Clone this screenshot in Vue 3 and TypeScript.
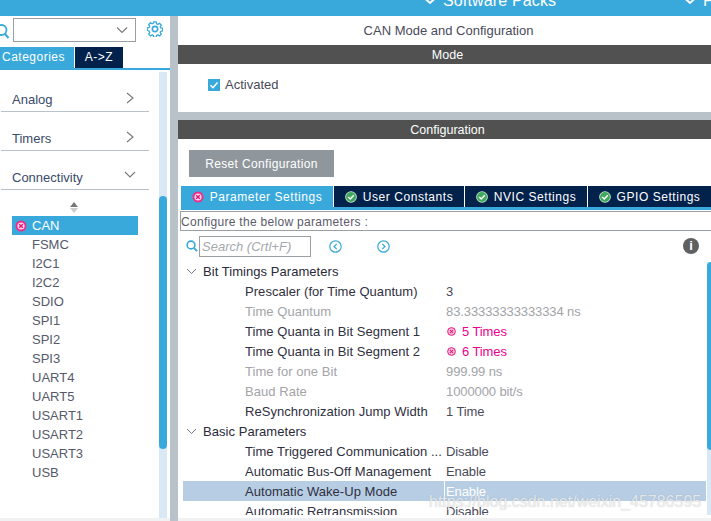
<script setup lang="ts">
interface Row { label?: string; value?: string; kind?: string; section?: boolean; selected?: boolean }
const modes: string[] = ['FSMC','I2C1','I2C2','SDIO','SPI1','SPI2','SPI3','UART4','UART5','USART1','USART2','USART3','USB']
const rows: Row[] = [
  { label: 'Bit Timings Parameters', section: true },
  { label: 'Prescaler (for Time Quantum)', value: '3' },
  { label: 'Time Quantum', value: '83.33333333333334 ns', kind: 'off' },
  { label: 'Time Quanta in Bit Segment 1', value: '5 Times', kind: 'err' },
  { label: 'Time Quanta in Bit Segment 2', value: '6 Times', kind: 'err' },
  { label: 'Time for one Bit', value: '999.99 ns', kind: 'off' },
  { label: 'Baud Rate', value: '1000000 bit/s', kind: 'off' },
  { label: 'ReSynchronization Jump Width', value: '1 Time' },
  { label: 'Basic Parameters', section: true },
  { label: 'Time Triggered Communication ...', value: 'Disable' },
  { label: 'Automatic Bus-Off Management', value: 'Enable' },
  { label: 'Automatic Wake-Up Mode', value: 'Enable', selected: true },
  { label: 'Automatic Retransmission', value: 'Disable' },
]
const tabs: string[] = ['User Constants', 'NVIC Settings', 'GPIO Settings']
</script>

<template>
  <div class="app">
    <div class="topbar">
      <span class="pack pack1"><svg width="14" height="8" viewBox="0 0 14 8"><path d="M1.5 0 7 5 12.5 0" fill="none" stroke="#fff" stroke-width="2"/></svg>Software Packs</span>
      <span class="pack pack2"><svg width="14" height="8" viewBox="0 0 14 8"><path d="M1.5 0 7 5 12.5 0" fill="none" stroke="#fff" stroke-width="2"/></svg>Pinout</span>
    </div>
    <div class="main">
      <aside class="side">
        <div class="searchrow">
          <svg class="mag" width="11" height="16" viewBox="0 0 11 16"><circle cx="2.5" cy="7" r="5" fill="none" stroke="#39a9dc" stroke-width="1.8"/><path d="M6 11 9.5 15" stroke="#39a9dc" stroke-width="2"/></svg>
          <div class="combo"><svg width="12" height="8" viewBox="0 0 12 8"><path d="M1 1.5 6 6.5 11 1.5" fill="none" stroke="#777" stroke-width="1.1"/></svg></div>
          <svg class="gear" width="16" height="16" viewBox="0 0 18 18"><path d="M7.6 1h2.8l.4 2.1 1.5.7 1.8-1.2 2 2-1.2 1.8.7 1.5 2.1.4v2.8l-2.1.4-.7 1.5 1.2 1.8-2 2-1.8-1.2-1.5.7-.4 2.1H7.6l-.4-2.1-1.5-.7-1.8 1.2-2-2 1.2-1.8-.7-1.5L.3 10.4V7.6l2.1-.4.7-1.5-1.2-1.8 2-2 1.8 1.2 1.5-.7z" fill="none" stroke="#39a9dc" stroke-width="1.5"/><circle cx="9" cy="9" r="3" fill="none" stroke="#39a9dc" stroke-width="1.8"/></svg>
        </div>
        <div class="sidetabs">
          <div class="stab on">Categories</div>
          <div class="stab">A-&gt;Z</div>
        </div>
        <div class="sidebody">
          <div class="tree">
            <div class="cat"><span>Analog</span><svg width="8" height="12" viewBox="0 0 8 12"><path d="M1 1 7 6 1 11" fill="none" stroke="#777" stroke-width="1.1"/></svg></div>
            <div class="cat"><span>Timers</span><svg width="8" height="12" viewBox="0 0 8 12"><path d="M1 1 7 6 1 11" fill="none" stroke="#777" stroke-width="1.1"/></svg></div>
            <div class="cat"><span>Connectivity</span><svg class="down" width="12" height="8" viewBox="0 0 12 8"><path d="M1 1 6 6 11 1" fill="none" stroke="#777" stroke-width="1.1"/></svg></div>
            <div class="sorter"><i class="up"></i><i class="dn"></i></div>
            <div class="mode sel">
              <svg width="12" height="12" viewBox="0 0 12 12"><circle cx="6" cy="6" r="5.5" fill="#ee2d8c"/><circle cx="6" cy="6" r="3.6" fill="#f9d5e6"/><path d="M4.2 4.2 7.8 7.8M7.8 4.2 4.2 7.8" stroke="#e2127a" stroke-width="1.3"/></svg>
              <span>CAN</span>
            </div>
            <div v-for="m in modes" :key="m" class="mode"><span>{{ m }}</span></div>
          </div>
          <div class="track"><div class="thumb"></div></div>
        </div>
      </aside>
      <section class="content">
        <div class="title">CAN Mode and Configuration</div>
        <div class="bar">Mode</div>
        <div class="modebody">
          <span class="check"><svg width="12" height="12" viewBox="0 0 12 12"><path d="M2.5 6.2 5 8.7 9.5 3.5" fill="none" stroke="#fff" stroke-width="1.6"/></svg></span>
          <span class="act">Activated</span>
        </div>
        <div class="bar">Configuration</div>
        <div class="config">
          <div class="reset">Reset Configuration</div>
          <div class="ctabs">
            <div class="ctab first">
              <svg width="12" height="12" viewBox="0 0 12 12"><circle cx="6" cy="6" r="5.5" fill="#ee2d8c"/><circle cx="6" cy="6" r="3.6" fill="#f9d5e6"/><path d="M4.2 4.2 7.8 7.8M7.8 4.2 4.2 7.8" stroke="#e2127a" stroke-width="1.3"/></svg>
              <span>Parameter Settings</span>
            </div>
            <div v-for="t in tabs" :key="t" class="ctab">
              <svg width="12" height="12" viewBox="0 0 12 12"><circle cx="6" cy="6" r="5.8" fill="#d6ecd9"/><circle cx="6" cy="6" r="5" fill="#3ea95e"/><path d="M3.2 6 5.3 8 8.8 4.2" fill="none" stroke="#fff" stroke-width="1.5"/></svg>
              <span>{{ t }}</span>
            </div>
          </div>
          <div class="hint">Configure the below parameters :</div>
          <div class="tools">
            <svg class="tmag" width="12" height="12" viewBox="0 0 12 12"><circle cx="5" cy="5" r="3.9" fill="none" stroke="#39a9dc" stroke-width="1.6"/><path d="M7.8 7.8 11 11" stroke="#39a9dc" stroke-width="1.8"/></svg>
            <div class="sbox">Search (Crtl+F)</div>
            <svg class="nav n1" width="13" height="13" viewBox="0 0 13 13"><circle cx="6.5" cy="6.5" r="5.7" fill="none" stroke="#39a9dc" stroke-width="1.2"/><path d="M7.7 4 5 6.5 7.7 9" fill="none" stroke="#39a9dc" stroke-width="1.2"/></svg>
            <svg class="nav n2" width="13" height="13" viewBox="0 0 13 13"><circle cx="6.5" cy="6.5" r="5.7" fill="none" stroke="#39a9dc" stroke-width="1.2"/><path d="M5.3 4 8 6.5 5.3 9" fill="none" stroke="#39a9dc" stroke-width="1.2"/></svg>
            <span class="info">i</span>
          </div>
          <div class="params">
            <div class="table">
              <div v-for="r in rows" :key="r.label" class="row" :class="{ selected: r.selected, section: r.section }">
                <template v-if="r.section">
                  <svg width="11" height="7" viewBox="0 0 11 7"><path d="M1 1 5.5 5.5 10 1" fill="none" stroke="#777" stroke-width="1"/></svg>
                  <span>{{ r.label }}</span>
                </template>
                <template v-else>
                  <span class="lab" :class="r.kind">{{ r.label }}</span>
                  <span class="val" :class="r.kind">
                    <svg v-if="r.kind === 'err'" width="9" height="9" viewBox="0 0 12 12"><circle cx="6" cy="6" r="5.2" fill="#f6b6d5" stroke="#e2127a" stroke-width="1.2"/><path d="M4 4 8 8M8 4 4 8" stroke="#e2127a" stroke-width="1.4"/></svg>
                    {{ r.value }}
                  </span>
                </template>
              </div>
            </div>
            <div class="rtrack"><div class="rthumb"></div></div>
          </div>
        </div>
        <div class="foot"></div>
      </section>
    </div>
    <div class="mark">https://blog.csdn.net/weixin_45786595</div>
  </div>
</template>

<style>
html, body { margin: 0; background: #fff; overflow: hidden; }
</style>

<style scoped>
.app { position: relative; width: 711px; height: 521px; overflow: hidden; font-family: "Liberation Sans", Arial, sans-serif; font-size: 13px; color: #4a4a5a; background: #fff; }
.topbar { height: 16px; background: #39a9dc; display: flex; color: #fff; font-size: 16px; line-height: 16px; overflow: hidden; }
.pack { display: flex; align-items: flex-end; gap: 6px; height: 9px; white-space: nowrap; letter-spacing: .15px; flex: none; }
.pack svg { flex: none; margin-bottom: 3px; }
.pack1 { margin-left: 423px; width: 260px; }
.main { display: flex; height: 505px; background: #b8c2c8; }
.side { width: 170px; background: #fff; display: flex; flex-direction: column; }
.searchrow { height: 31px; display: flex; align-items: flex-start; flex: none; overflow: hidden; }
.mag { margin-top: 7px; margin-left: -1px; flex: none; }
.combo { width: 114px; height: 22px; margin: 2px 0 0 3px; border: 1px solid #9a9fa3; display: flex; align-items: center; justify-content: flex-end; padding-right: 7px; box-sizing: content-box; flex: none; }
.gear { margin: 5px 0 0 11px; flex: none; }
.sidetabs { height: 21px; display: flex; gap: 1px; flex: none; border-bottom: 2px solid #39a9dc; }
.stab { width: 48px; background: #02214b; color: #fff; font-size: 12px; line-height: 21px; text-align: center; letter-spacing: .5px; }
.stab.on { width: 74px; background: #39a9dc; text-align: left; padding-left: 2px; box-sizing: border-box; }
.sidebody { flex: 1; display: flex; min-height: 0; padding-right: 3px; border-bottom: 3px solid #f0f1f3; }
.tree { flex: 1; min-width: 0; padding-top: 2px; }
.cat { height: 39px; margin: 0 10px 0 1px; padding: 0 15px 3px 11px; box-sizing: border-box; border-bottom: 1px solid #b8c2c8; display: flex; align-items: flex-end; justify-content: space-between; color: #3a4a6a; line-height: 16px; }
.cat:first-child { height: 40px; }
.cat svg { margin-bottom: 4px; }
.cat svg.down { margin-bottom: 7px; margin-right: -2px; }
.sorter { height: 26px; display: flex; flex-direction: column; align-items: center; justify-content: flex-end; width: 148px; padding-bottom: 3px; box-sizing: border-box; }
.sorter i { display: block; width: 0; border-left: 4px solid transparent; border-right: 4px solid transparent; }
.sorter .up { border-bottom: 5px solid #777; margin-bottom: 1px; }
.sorter .dn { border-top: 5px solid #ccc; }
.mode { height: 19px; margin: 0 21px 0 12px; padding-left: 20px; display: flex; align-items: center; line-height: 19px; color: #56596a; position: relative; }
.mode.sel { background: #39a9dc; color: #fff; }
.mode.sel svg { position: absolute; left: 3px; top: 4px; }
.track { width: 8px; margin-top: 2px; background: #d9e8f5; position: relative; }
.thumb { position: absolute; left: 0; right: 0; top: 124px; height: 253px; background: #39a9dc; border-radius: 4px; }
.content { margin-left: 8px; width: 533px; background: #fff; display: flex; flex-direction: column; }
.title { height: 29px; line-height: 29px; text-align: center; color: #4a4a5a; margin-left: 8px; flex: none; }
.bar { height: 19px; line-height: 21px; background: #505150; color: #fff; text-align: center; font-size: 12.5px; flex: none; padding-left: 6px; overflow: hidden; }
.modebody { height: 42px; padding-bottom: 6px; flex: none; border-bottom: 8px solid #b8c2c8; box-sizing: content-box; display: flex; align-items: center; padding-left: 30px; gap: 5px; }
.check { width: 12px; height: 12px; background: #39a9dc; display: flex; }
.act { margin-top: -1px; }
.config { flex: 1; min-height: 0; display: flex; flex-direction: column; }
.reset { align-self: flex-start; width: 145px; height: 27px; line-height: 28px; margin: 11px 0 0 11px; background: #8f969c; color: #fff; font-size: 12px; text-align: center; letter-spacing: .35px; flex: none; }
.ctabs { display: flex; gap: 1px; margin: 9px 0 0 3px; height: 21px; border-bottom: 3px solid #39a9dc; flex: none; }
.ctab { width: 122px; background: #02214b; color: #fff; font-size: 12px; line-height: 21px; letter-spacing: .55px; display: flex; align-items: center; justify-content: center; gap: 6px; white-space: nowrap; flex: none; }
.ctab span { padding-top: 1px; }
.ctab.first { width: 152px; background: #39a9dc; }
.ctab:nth-child(2) { width: 130px; }
.ctab:nth-child(4) { width: 123px; }
.hint { height: 20px; line-height: 20px; margin: 1px 0 0 2px; border: 1px solid #9a9fa3; border-right: 0; box-sizing: border-box; color: #5a5a6a; letter-spacing: .3px; flex: none; font-size: 12px; }
.tools { height: 22px; margin-top: 4px; display: flex; align-items: center; position: relative; flex: none; }
.tmag { margin-left: 8px; flex: none; }
.sbox { width: 112px; height: 21px; margin-left: 1px; border: 1px solid #9a9fa3; box-sizing: border-box; line-height: 20px; font-style: italic; color: #a5a8ac; padding-left: 2px; flex: none; }
.nav { flex: none; }
.n1 { margin-left: 18px; }
.n2 { margin-left: 35px; }
.info { margin-left: 293px; width: 16px; height: 16px; background: #5f6062; color: #fff; border-radius: 50%; text-align: center; font: bold 13px/16px "Liberation Sans", sans-serif; flex: none; }
.params { flex: 1; min-height: 0; display: flex; overflow: hidden; margin: 4px 0 3px; }
.table { width: 523px; margin: 0 1px 0 5px; flex: none; }
.row { height: 20px; display: flex; align-items: center; color: #4a4a5a; white-space: nowrap; letter-spacing: .05px; }
.row.section { color: #2a2a3a; padding-left: 3px; gap: 6px; }
.lab { margin-left: 62px; width: 200px; color: #303040; flex: none; }
.val { padding-left: 1px; display: flex; align-items: center; gap: 6px; color: #4a4a5a; letter-spacing: -.1px; }
.off { color: #a3a3a8; }
.val.err { color: #ec008c; padding-left: 2px; }
.selected { background: #b6cde4; }
.selected .val { color: #fff; border-left: 1px solid #fff; height: 100%; margin-left: -1px; }
.rtrack { width: 8px; margin-top: 1px; height: 253px; background: #d9e8f5; position: relative; flex: none; }
.rthumb { position: absolute; left: 0; right: 0; top: 0; height: 188px; background: #39a9dc; border-radius: 4px 0 0 4px; }
.foot { height: 3px; background: #f0f1f3; flex: none; }
.mark { position: absolute; left: 429px; top: 492px; font-size: 16px; line-height: 20px; color: rgba(255,255,255,.72); text-shadow: 0 0 1px rgba(130,130,130,.55); white-space: nowrap; pointer-events: none; }
</style>
